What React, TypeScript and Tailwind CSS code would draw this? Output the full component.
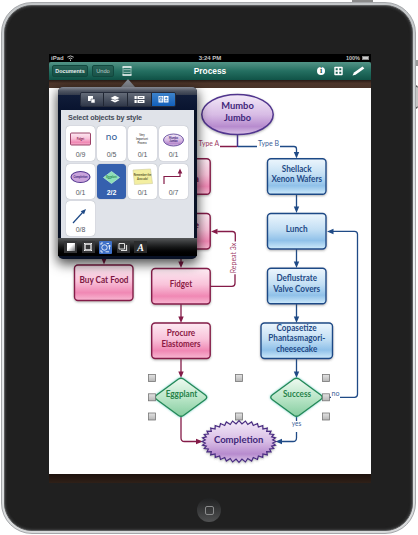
import type { ReactNode } from 'react';

const BLUE = '#1f4a86';
const PINK = '#841b48';

type LabelProps = { x: number; y: number; w: number; fill: string; children: string; size?: number; weight?: number };

function Label({ x, y, w, fill, children, size = 8.8, weight = 700 }: LabelProps) {
  return (
    <text x={x} y={y} textLength={w} lengthAdjust="spacingAndGlyphs" textAnchor="middle" fill={fill} fontSize={size} fontWeight={weight} fontFamily="Lato, 'Open Sans', sans-serif">
      {children}
    </text>
  );
}

function Box({ x, y, w = 58.5, tone }: { x: number; y: number; w?: number; tone: 'pink' | 'blue' }) {
  return (
    <rect x={x} y={y} width={w} height={35.5} rx={3.5} fill={tone === 'pink' ? 'url(#pink)' : 'url(#blue)'} stroke={tone === 'pink' ? PINK : BLUE} strokeWidth={1.4} filter="url(#soft)" />
  );
}

function burst(cx: number, cy: number, rx: number, ry: number, n: number) {
  const pts: string[] = [];
  for (let i = 0; i < n * 2; i++) {
    const a = (i * Math.PI) / n;
    const k = i % 2 ? 3.2 : 0;
    pts.push(`${(cx + (rx - k) * Math.cos(a)).toFixed(2)},${(cy + (ry - k) * Math.sin(a)).toFixed(2)}`);
  }
  return pts.join(' ');
}

function Down({ x, y, color }: { x: number; y: number; color: string }) {
  return <path d={`M${x - 2.7} ${y - 6.5}h5.4L${x} ${y}z`} fill={color} />;
}

const handles = [[152, 378], [152, 397.3], [152, 416.5], [239, 378], [239, 416.5], [326, 378], [326, 397.3], [326, 416.5]];

function Diagram() {
  return (
    <svg viewBox="49 88 322 386" width="322" height="386" className="block">
      <defs>
        <linearGradient id="pink" x2="0" y2="1"><stop offset="0" stopColor="#fdebf3" /><stop offset=".45" stopColor="#f9c3da" /><stop offset=".78" stopColor="#f088b4" /><stop offset="1" stopColor="#f8b8d2" /></linearGradient>
        <linearGradient id="blue" x2="0" y2="1"><stop offset="0" stopColor="#edf6fd" /><stop offset=".45" stopColor="#c3dff4" /><stop offset=".76" stopColor="#90c1e9" /><stop offset="1" stopColor="#d0ebfb" /></linearGradient>
        <linearGradient id="violet" x2="0" y2="1"><stop offset="0" stopColor="#f3eaf8" /><stop offset=".5" stopColor="#d8bce5" /><stop offset=".8" stopColor="#b78bce" /><stop offset="1" stopColor="#dbc5e8" /></linearGradient>
        <linearGradient id="green" x2="0" y2="1"><stop offset="0" stopColor="#effaf1" /><stop offset=".55" stopColor="#b6e4c5" /><stop offset="1" stopColor="#86cda0" /></linearGradient>
        <linearGradient id="grip" x2="0" y2="1"><stop stopColor="#e3e3e3" /><stop offset="1" stopColor="#b6b6b6" /></linearGradient>
        <filter id="soft" x="-20%" y="-20%" width="140%" height="150%"><feDropShadow dx="0" dy="1" stdDeviation=".8" floodColor="#555" floodOpacity=".45" /></filter>
        <filter id="glow" x="-20%" y="-20%" width="140%" height="140%"><feDropShadow dx="0" dy="0" stdDeviation="1.2" floodColor="#4ac0b0" floodOpacity=".8" /></filter>
      </defs>

      <g fill="none" stroke={PINK} strokeWidth="1.3">
        <path d="M220 146.5h17M181 194v17M104 240v22M181 249v15M181 304v15M181 359v15" />
        <path d="M210 286.3h22q3 0 3-3v-9M235.3 241.5v-7q0-3-3-3h-15" />
        <path d="M181 416v22q0 3.5 3.5 3.5h12" />
      </g>
      <g fill="none" stroke={BLUE} strokeWidth="1.3">
        <path d="M237.5 146.5H257M280 146.5h14q2.5 0 2.5 2.5v5M296.5 194v15M296.5 249v15M296.5 304v15M296.5 359v15" />
        <path d="M327 397.3h4M340 397.3h14.5q3 0 3-3v-160q0-3-3-3H333" />
        <path d="M296.5 416v5M296.5 432v6q0 3.5-3.5 3.5h-12" />
      </g>
      <path d="M237.5 134v13" stroke="#43328c" strokeWidth="1.5" />

      {[213, 268, 323, 378].map((y) => <Down key={y} x={181} y={y} color={PINK} />)}
      {[158.5, 213, 268, 323, 378].map((y) => <Down key={y} x={296.5} y={y} color={BLUE} />)}
      <Down x={104} y={264.5} color={PINK} />
      <path d="M211 231.5l6.5-2.7v5.4z M203 441.5l-7-2.7v5.4z" fill={PINK} />
      <path d="M327 231.5l6.5-2.7v5.4z M275.5 441.5l6.5-2.7v5.4z" fill={BLUE} />

      <ellipse cx="237.5" cy="114.6" rx="35.7" ry="20" fill="url(#violet)" stroke="#51358e" strokeWidth="1.5" filter="url(#soft)" />
      <Label x={237.5} y={109.2} w={32.5} size={9.8} fill="#41277a">Mumbo</Label>
      <Label x={237.5} y={121} w={27} size={9.8} fill="#41277a">Jumbo</Label>

      <Label x={208.8} y={145.9} w={20.5} size={7.7} weight={400} fill="#a04065">Type A</Label>
      <Label x={268.5} y={145.9} w={21} size={7.7} weight={400} fill="#3b6298">Type B</Label>

      <Box x={151.7} y={158.7} tone="pink" />
      <Box x={151.7} y={213.5} tone="pink" />
      <Box x={151.7} y={268.5} tone="pink" />
      <Box x={151.7} y={323} tone="pink" />
      <Box x={74.5} y={265} tone="pink" />
      <Box x={267.5} y={158.7} tone="blue" />
      <Box x={267.5} y={213.5} tone="blue" />
      <Box x={267.5} y={268.3} tone="blue" />
      <Box x={261} y={323} w={71.5} tone="blue" />

      <Label x={181} y={182} w={36} fill={PINK}>Banana</Label>
      <Label x={181} y={228} w={36} fill={PINK}>Juggle</Label>
      <Label x={104} y={282.5} w={49} fill="#7c1742">Buy Cat Food</Label>
      <Label x={181} y={286.5} w={22.5} fill="#8c1843">Fidget</Label>
      <Label x={181} y={336} w={28.5} fill="#8c1843">Procure</Label>
      <Label x={181} y={346.5} w={39} fill="#8c1843">Elastomers</Label>
      <Label x={296.7} y={172} w={30} fill={BLUE}>Shellack</Label>
      <Label x={296.7} y={182.2} w={50.5} fill={BLUE}>Xenon Wafers</Label>
      <Label x={296.7} y={231.5} w={22} fill={BLUE}>Lunch</Label>
      <Label x={296.7} y={281.3} w={40.5} fill={BLUE}>Deflustrate</Label>
      <Label x={296.7} y={291.5} w={47} fill={BLUE}>Valve Covers</Label>
      <Label x={296.5} y={330.8} w={40} fill={BLUE}>Copasetize</Label>
      <Label x={296.8} y={341.2} w={57} fill={BLUE}>Phantasmagori-</Label>
      <Label x={296.7} y={351.6} w={41} fill={BLUE}>cheesecake</Label>

      <g transform="rotate(-90 235 258)">
        <Label x={235} y={258.6} w={30.5} size={7.6} weight={400} fill="#a04065">Repeat 3x</Label>
      </g>

      {[181, 296.5].map((x) => (
        <path key={x} d={`M${x - 2.5} 379q2.5-1.5 5 0l21.5 15.8q3.5 2.5 0 5L${x + 2.5} 415.5q-2.5 1.5-5 0l-21.500-15.700q-3.500-2.500 0-5z`} fill="url(#green)" stroke="#258957" strokeWidth="1.4" filter="url(#glow)" />
      ))}
      <Label x={181.5} y={396.8} w={31.5} fill="#258249">Eggplant</Label>
      <Label x={297} y={396.8} w={28} fill="#258249">Success</Label>
      {handles.map(([x, y]) => <rect key={`${x}-${y}`} x={x - 3.5} y={y - 3.5} width="7" height="7" fill="url(#grip)" stroke="#777" strokeWidth=".8" />)}
      <Label x={335.5} y={396} w={8} size={7.5} weight={400} fill="#3b6298">no</Label>
      <Label x={296.5} y={426.2} w={9.5} size={7.5} weight={400} fill="#3b6298">yes</Label>

      <polygon points={burst(239, 441.5, 37, 20.8, 36)} fill="url(#violet)" stroke="#4a2c82" strokeWidth="1.2" filter="url(#soft)" />
      <Label x={238.7} y={442.7} w={49.5} size={9.8} fill="#41277a">Completion</Label>
    </svg>
  );
}

function Tile({ count, on, children }: { count: string; on?: boolean; children: ReactNode }) {
  return (
    <div className={on ? 'flex h-[35px] w-[29px] flex-col items-center rounded-[4px] bg-[#3560ae] text-white shadow-[0_0_1px_#6b7280]' : 'flex h-[35px] w-[29px] flex-col items-center rounded-[4px] bg-white text-[#555a63] shadow-[0_0_1px_#8a909b]'}>
      <div className="flex h-[25px] w-full items-center justify-center">{children}</div>
      <span className={on ? 'text-[7px] leading-[8px] font-bold' : 'text-[7px] leading-[8px]'}>{count}</span>
    </div>
  );
}

function Mini({ children }: { children: ReactNode }) {
  return <svg width="29" height="25" viewBox="0 0 29 25">{children}</svg>;
}

const tiny = { textAnchor: 'middle' as const, fontSize: 2.7, fontWeight: 700, fontFamily: 'Lato, sans-serif' };

function Popover() {
  return (
    <div className="absolute top-[78px] left-[58px] flex w-[139px] flex-col">
      <svg width="16" height="9" viewBox="0 0 16 9" className="ml-[62px] block"><path d="M8 1L15 9H1z" fill="#858992" /></svg>
      <div className="flex h-[172px] flex-col rounded-[5px] bg-[#081125] px-[3px] shadow-[0_4px_12px_1px_rgba(0,0,0,0.7)]">
        <div className="-mx-[3px] flex h-[23px] items-start justify-center rounded-t-[5px] bg-[linear-gradient(#858994_0,#4f5562_4px,#343b4c_8px,#101c39_8px,#09142f_100%)] pt-[5px]">
          <div className="flex h-[15px] overflow-hidden rounded-[2px] border border-[#252b3b]">
            <div className="flex w-[23px] items-center justify-center border-r border-[#202633] bg-linear-to-b from-[#656c79] to-[#303849]">
              <svg width="9" height="9" viewBox="0 0 9 9"><path d="M1 1h5v5H1z" fill="#fff" /><path d="M4 4h4v4H4z" fill="#fff" stroke="#4c5361" strokeWidth=".6" /></svg>
            </div>
            <div className="flex w-[24px] items-center justify-center border-r border-[#202633] bg-linear-to-b from-[#656c79] to-[#303849]">
              <svg width="10" height="9" viewBox="0 0 10 9"><path d="M5 .7l4.500 2.200L5 5 .5 2.900zM.5 5.200L2.500 4.400 5 5.600l2.500-1.200 2 .8L5 7.500z" fill="#fff" /></svg>
            </div>
            <div className="flex w-[24px] items-center justify-center border-r border-[#202633] bg-linear-to-b from-[#656c79] to-[#303849]">
              <svg width="11" height="9" viewBox="0 0 11 9"><path d="M.5 1h2.200v3H.5zM3.500 1h7v3h-7zM.5 5h2.200v3H.5zM3.500 5h7v3h-7z" fill="#fff" /><path d="M5 2.500h4M5 6.500h4" stroke="#48505f" strokeWidth=".7" /></svg>
            </div>
            <div className="flex w-[23px] items-center justify-center bg-linear-to-b from-[#3d83ca] to-[#1160bc]">
              <svg width="11" height="9" viewBox="0 0 11 9"><path d="M.5 1h4.700v6.500H.5zM5.800 1h4.700v6.500H5.800z" fill="#fff" /><path d="M1.700 2.200h2.200v2H1.700zM1.500 5.800h2.800M6.800 5.800h2.800M8.200 2v2.600M6.900 3.300h2.600" fill="none" stroke="#2b70bd" strokeWidth=".8" /></svg>
            </div>
          </div>
        </div>
        <div className="h-[128px] bg-[#e0e3e9] pl-[5px]">
          <div className="flex h-[16px] items-center pl-[2px] text-[7.2px] font-bold tracking-[-0.14px] text-[#444b58]">Select objects by style</div>
          <div className="grid w-[122px] grid-cols-4 gap-x-[2px] gap-y-[2.5px]">
            <Tile count="0/9"><Mini><rect x="4.5" y="7" width="20" height="12" rx="1" fill="url(#pink)" stroke={PINK} strokeWidth=".8" /><text x="14.5" y="13.5" fill={PINK} {...tiny}>Fidget</text></Mini></Tile>
            <Tile count="0/5"><span className="pb-[6px] font-[Lato,sans-serif] text-[10px] leading-none text-[#2f5b96]">no</span></Tile>
            <Tile count="0/1"><Mini><g fill="#555" {...tiny}><text x="14" y="10">Very</text><text x="14" y="14">Important</text><text x="14" y="18">Process</text></g></Mini></Tile>
            <Tile count="0/1"><Mini><ellipse cx="14.5" cy="14" rx="10" ry="6" fill="url(#violet)" stroke="#51358e" strokeWidth=".8" /><g fill="#41277a" {...tiny}><text x="14.5" y="13.2">Mumbo</text><text x="14.5" y="16.4">Jumbo</text></g></Mini></Tile>
            <Tile count="0/1"><Mini><ellipse cx="14.5" cy="13" rx="9.5" ry="5.5" fill="#c9a3db" stroke="#51358e" strokeWidth="1.1" /><text x="14.5" y="14" fill="#41277a" {...tiny}>Completion</text></Mini></Tile>
            <Tile count="2/2" on><Mini><path d="M14.5 7.5l8 6-8 6-8-6z" fill="#8edfb7" stroke="#b8f0d3" strokeWidth=".7" /><text x="14.5" y="14.2" fill="#258249" {...tiny}>Eggplant</text></Mini></Tile>
            <Tile count="0/1"><Mini><path d="M5 6l17.5-1 2 14.5-18 1z" fill="#f3eea0" stroke="#cfcca0" strokeWidth=".6" /><g fill="#5b572b" {...tiny}><text x="14.5" y="12">Remember the</text><text x="14.5" y="15.5">Avocado!</text></g></Mini></Tile>
            <Tile count="0/7"><Mini><path d="M5 20v-7.500h16V9" fill="none" stroke={PINK} strokeWidth="1.2" /><path d="M21 4.500l2.300 5h-4.600z" fill={PINK} /></Mini></Tile>
            <Tile count="0/8"><Mini><path d="M7 22L17 11" stroke={BLUE} strokeWidth="1.2" /><path d="M20 8l-2 5.300-3.300-3z" fill={BLUE} /></Mini></Tile>
          </div>
        </div>
        <div className="-mx-[3px] flex h-[18px] items-center gap-[4.5px] bg-linear-to-b from-[#56585a] via-[#171819] to-black pl-[6px]">
          <div className="flex h-[12px] w-[13px] items-center justify-center bg-[#353638]"><div className="h-[8px] w-[8px] bg-linear-to-br from-white from-45% to-[#77797d]" /></div>
          <div className="flex h-[12px] w-[13px] items-center justify-center bg-[#353638]"><svg width="10" height="10" viewBox="0 0 10 10"><path d="M2 2h6v6H2z" fill="none" stroke="#eee" strokeWidth="1.3" /><path d="M1 1h1v1H1zM8 1h1v1H8zM1 8h1v1H1zM8 8h1v1H8z" fill="#fff" /></svg></div>
          <div className="flex h-[13px] w-[13px] items-center justify-center rounded-[1px] bg-[#3e70c7]"><svg width="11" height="11" viewBox="0 0 11 11" fill="none" stroke="#fff" strokeWidth=".8"><circle cx="4.5" cy="5.5" r="2.7" /><path d="M1 3V1h2M6.500 1.500H9M9.500 3.500v4M8.300 4.500l1.200-1.500 1.200 1.500M1 8v2h2M5.500 9.800H9" /></svg></div>
          <div className="flex h-[12px] w-[13px] items-center justify-center bg-[#353638]"><svg width="10" height="10" viewBox="0 0 10 10" fill="none" stroke="#ddd"><path d="M1 1.500h5.500V7H1z" /><path d="M3 8.500h5.500V3" strokeWidth="1.2" /></svg></div>
          <div className="flex h-[12px] w-[13px] items-center justify-center bg-[#2b2c2d] font-['Liberation_Serif',serif] text-[10px] font-bold text-white italic">A</div>
        </div>
      </div>
    </div>
  );
}

export default function App() {
  return (
    <div className="relative h-[535px] w-[418px] overflow-hidden bg-white pt-[2px] pl-px font-['Liberation_Sans',Arial,sans-serif]">
      <div className="absolute top-0 left-[352px] h-[3px] w-[21px] bg-[#8b8b8b]" />
      <div className="absolute top-[60px] left-[415px] h-[6px] w-[3px] bg-[#9b9b9b]" />
      <div className="absolute top-[85px] left-[415px] h-[24px] w-[3px] rounded-r-sm border-t-2 border-b-2 border-[#555] bg-[#c5c5c5]" />
      <div className="relative h-[532px] w-[415px] rounded-[31px] border border-[#a5a7aa] bg-linear-to-b from-[#c3c6c8] via-[#edf0f2] to-[#d7d9da] p-[2px]">
        <div className="flex h-[526px] w-[409px] flex-col items-center rounded-[28px] border border-[#5b5c5d] bg-[#202020] shadow-[inset_0_0_2px_1px_#393a3b]">
          <div className="mt-[48px] ml-[3px] flex w-[322px] flex-col">
            <div className="grid h-[8px] grid-cols-3 items-center bg-black px-[2px] text-[6px] leading-[8px] font-bold text-[#c5c5c5]">
              <div className="flex items-center gap-[3px]">iPad
                <svg width="7" height="6" viewBox="0 0 7 6" fill="none" stroke="#ccc" strokeWidth=".9"><path d="M.3 2.200Q3.500-.4 6.700 2.200M1.700 3.700q1.800-1.300 3.600 0M3.500 4.500V6" /></svg>
              </div>
              <div className="text-center">3:24 PM</div>
              <div className="flex items-center justify-end gap-[2px] text-[5.5px]">100%<div className="h-[4px] w-[7px] border border-[#888] bg-[#ccc]" /></div>
            </div>
            <div className="grid h-[18px] grid-cols-3 items-center rounded-t-[2px] bg-linear-to-b from-[#529487] via-[#246f61] to-[#105347] px-[3px]">
              <div className="flex items-center gap-[4px]">
                <div className="flex h-[12px] w-[36px] items-center justify-center rounded-[2px] border border-[#12483f] bg-linear-to-b from-[#286257] to-[#134f43] text-[5.4px] font-bold text-[#e5eeee]">Documents</div>
                <div className="flex h-[12px] w-[22px] items-center justify-center rounded-[2px] border border-[#12483f] bg-linear-to-b from-[#286257] to-[#195348] text-[5.7px] text-[#b7cbc6]">Undo</div>
                <svg width="10" height="10" viewBox="0 0 10 10" className="ml-[4px]"><path d="M1 1v8M9 1v8" stroke="#b9d4ce" strokeWidth=".7" /><path d="M.5 1h9M.5 9h9" stroke="#fff" strokeWidth="1.3" /><path d="M1.500 3.700h7M1.500 6.300h7" stroke="#b9d4ce" strokeWidth=".8" /></svg>
              </div>
              <div className="text-center text-[8.4px] font-bold text-white">Process</div>
              <div className="flex items-center justify-end gap-[9px] pr-[3px]">
                <div className="flex h-[8px] w-[8px] items-center justify-center rounded-full bg-white font-['Liberation_Serif',serif] text-[8px] font-bold text-[#17594d]">i</div>
                <svg width="9" height="10" viewBox="0 0 9 10"><rect x=".3" y=".7" width="8.400" height="8.600" rx=".8" fill="#fff" /><path d="M1.700 2.200h2v2h-2zM5.300 2.200h2v2h-2zM1.700 5.800h2v2h-2zM5.300 5.800h2v2h-2z" fill="#1d6557" /></svg>
                <svg width="13" height="10" viewBox="0 0 13 10"><path d="M.5 9.500l1.500-2.900L10.500.6l1.800 1.800L3.600 8.700z" fill="#fff" /></svg>
              </div>
            </div>
            <div className="h-[8px] bg-[linear-gradient(#281b16,#4d352a_40%,#493429)]" />
            <div className="h-[386px] bg-white"><Diagram /></div>
            <div className="h-[9px] bg-[linear-gradient(#1d120d,#2f2018)]" />
          </div>
          <div className="mt-[15px] ml-[1px] flex h-[24px] w-[24px] items-center justify-center rounded-full bg-linear-to-b from-[#202122] to-[#505152]">
            <div className="h-[9px] w-[9px] rounded-[2px] border border-[#8a8b8c]" />
          </div>
        </div>
      </div>
      <Popover />
    </div>
  );
}
